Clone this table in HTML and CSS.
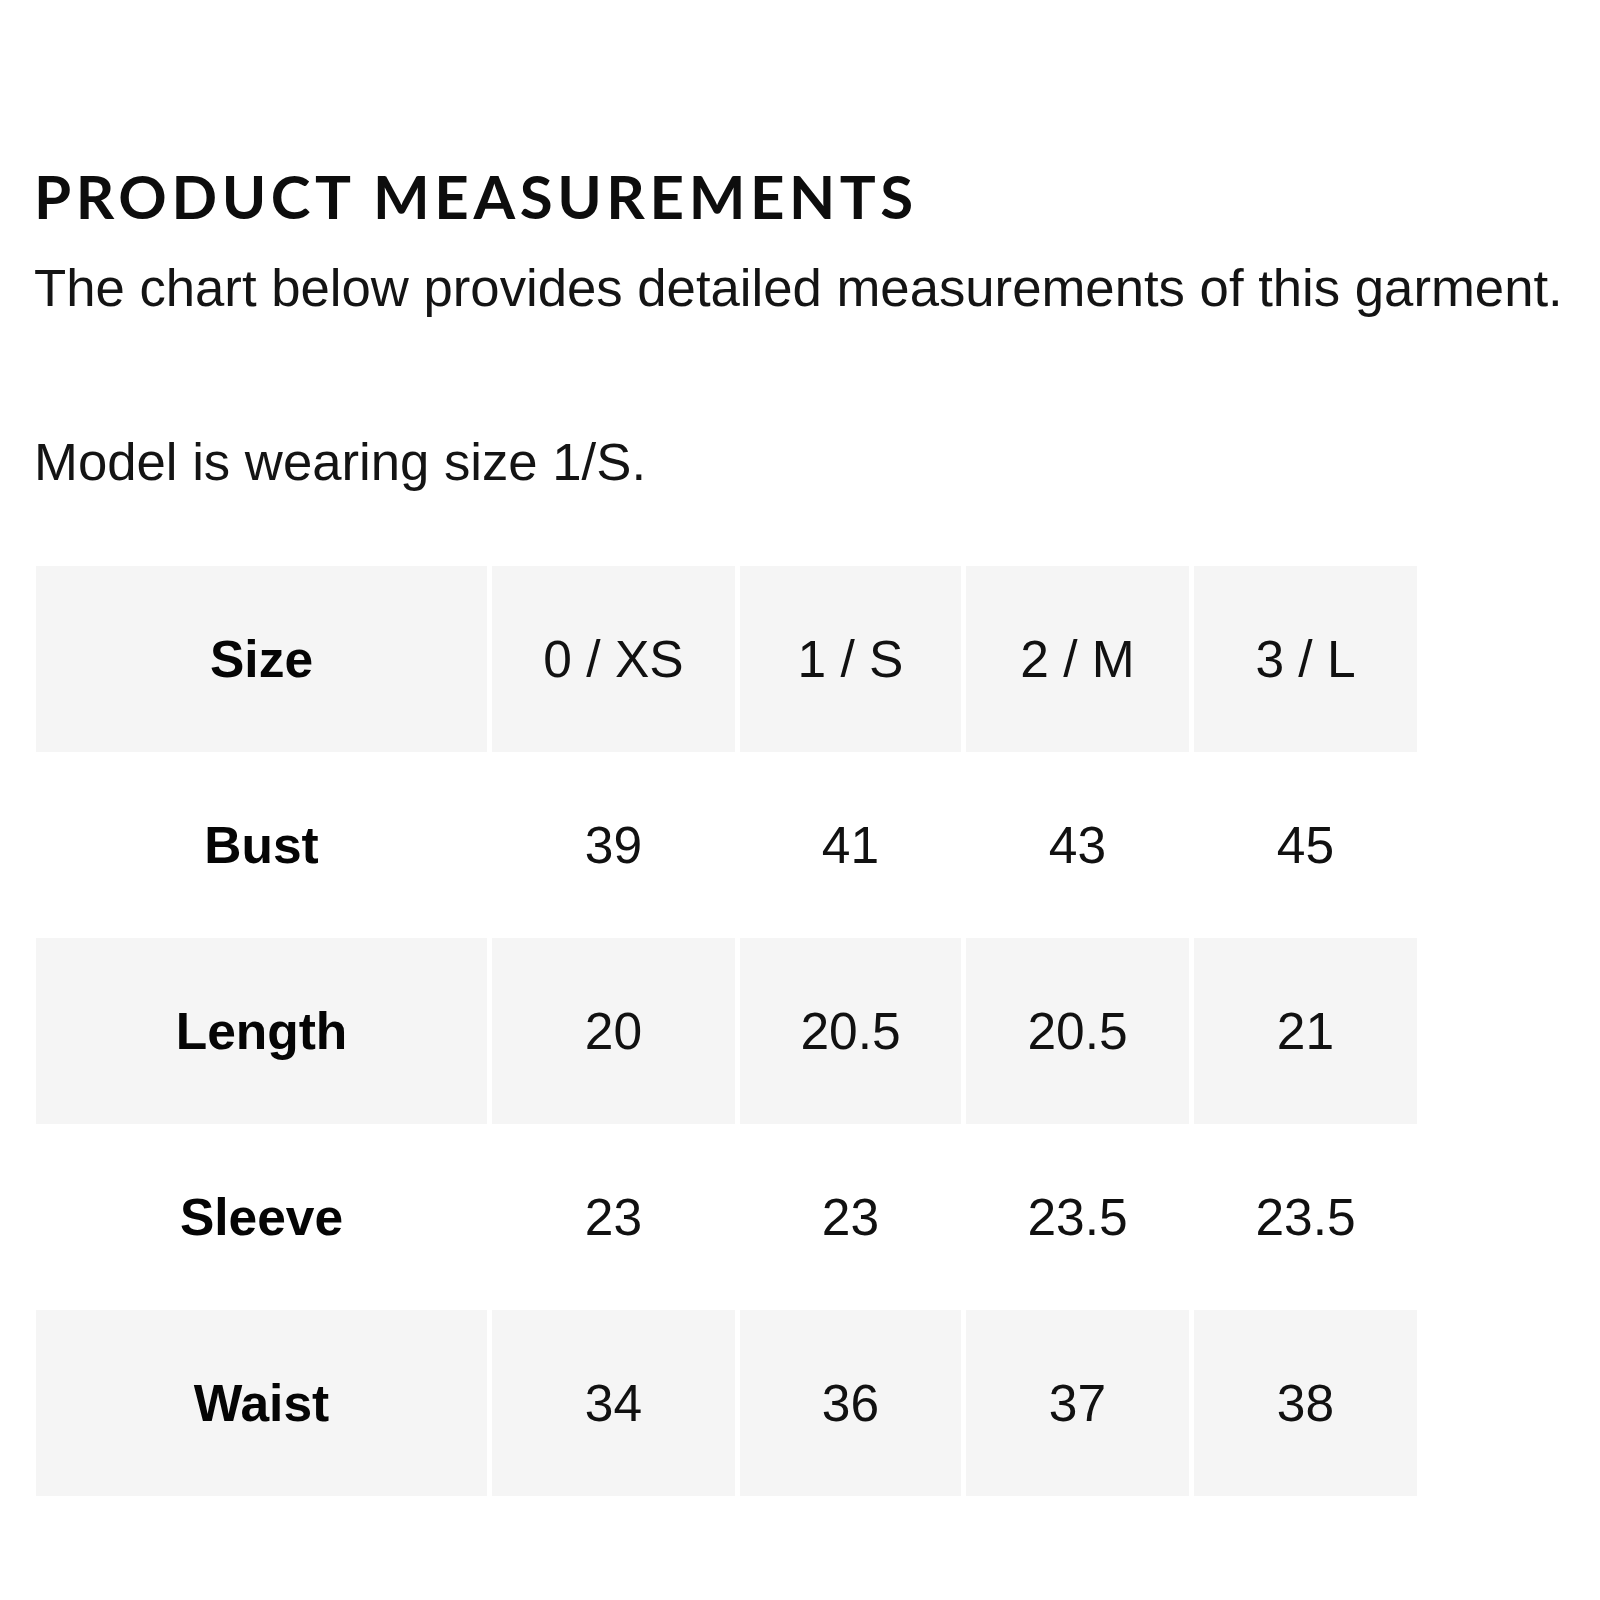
FILE: index.html
```html
<!DOCTYPE html>
<html lang="en">
<head>
<meta charset="utf-8">
<title>Product Measurements</title>
<link rel="stylesheet" href="styles.css">
</head>
<body>
<main class="page">
  <h1 class="title">PRODUCT MEASUREMENTS</h1>
  <p class="lead">The chart below provides detailed measurements of this garment.</p>
  <p class="model">Model is wearing size 1/S.</p>
  <div class="chart">
    <div class="row shaded">
      <div class="cell label">Size</div>
      <div class="cell">0 / XS</div>
      <div class="cell">1 / S</div>
      <div class="cell">2 / M</div>
      <div class="cell">3 / L</div>
    </div>
    <div class="row">
      <div class="cell label">Bust</div>
      <div class="cell">39</div>
      <div class="cell">41</div>
      <div class="cell">43</div>
      <div class="cell">45</div>
    </div>
    <div class="row shaded">
      <div class="cell label">Length</div>
      <div class="cell">20</div>
      <div class="cell">20.5</div>
      <div class="cell">20.5</div>
      <div class="cell">21</div>
    </div>
    <div class="row">
      <div class="cell label">Sleeve</div>
      <div class="cell">23</div>
      <div class="cell">23</div>
      <div class="cell">23.5</div>
      <div class="cell">23.5</div>
    </div>
    <div class="row shaded">
      <div class="cell label">Waist</div>
      <div class="cell">34</div>
      <div class="cell">36</div>
      <div class="cell">37</div>
      <div class="cell">38</div>
    </div>
  </div>
</main>
</body>
</html>
```

FILE: styles.css
```css
html, body {
  margin: 0;
  padding: 0;
  background: #ffffff;
}

.page {
  padding: 166px 0 0 34px;
  color: #111111;
  font-family: "Liberation Sans", Arial, sans-serif;
}

.title {
  margin: 0;
  font-family: Lato, "Open Sans", sans-serif;
  font-weight: 700;
  font-size: 60px;
  line-height: 60px;
  letter-spacing: 4.6px;
  color: #0d0d0d;
}

.lead {
  margin: 32px 0 0 0;
  font-size: 52.7px;
  line-height: 60px;
  color: #141414;
}

.model {
  margin: 114px 0 0 0;
  font-size: 52.7px;
  line-height: 60px;
  color: #141414;
}

.chart {
  margin-top: 74px;
  margin-left: 2px;
  width: 1381px;
  display: flex;
  flex-direction: column;
}

.row {
  display: grid;
  grid-template-columns: 451px 243px 221px 223px 223px;
  column-gap: 5px;
  height: 186px;
}

.cell {
  display: flex;
  align-items: center;
  justify-content: center;
  font-size: 51.5px;
  color: #111111;
}

.shaded .cell {
  background: #f5f5f5;
}

.label {
  font-weight: 700;
  color: #050505;
}
```
